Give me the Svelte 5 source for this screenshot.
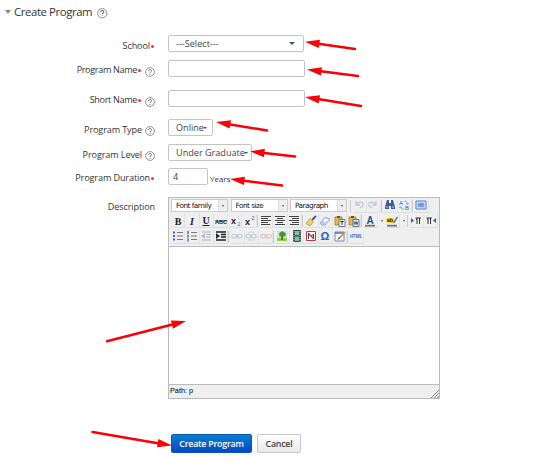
<script>
  const rows = [
    ['bold', 'italic', 'under', 'strike', 'sub', 'sup', '|', 'left', 'center', 'right', '|', 'brush', 'eraser', 'paste', 'pastew', '|', 'color', 'v', 'hilite', 'v', '|', 'ltr', 'rtl'],
    ['ul', 'ol', 'outdent', 'indent', '|', 'link', 'unlink', 'anchor', '|', 'image', 'film', 'nolink', 'omega', 'edit', '|', 'html']
  ];
  const arrows = [
    [305, 41.7, 355, 49], [307, 69.5, 358, 76], [305, 97, 361, 106], [216, 122, 267, 130.5],
    [250, 151.3, 295, 156.5], [230, 179, 282, 185.5], [186, 321, 107, 341.3], [172, 445.6, 92.5, 432]
  ].map(([x, y, tx, ty]) => {
    const len = Math.hypot(tx - x, ty - y);
    return { x, y, len, angle: (Math.atan2(ty - y, tx - x) * 180) / Math.PI };
  });
</script>

{#snippet help(size)}
  <svg class="help" width={size} height={size} viewBox="0 0 10 10">
    <circle cx="5" cy="5" r="4.4" fill="#fff" stroke="#777" stroke-width=".8" />
    <path d="M3.5 4C3.5 2 6.5 2 6.5 3.8C6.5 4.8 5 4.8 5 6M5 6.9V7.9" fill="none" stroke="#666" stroke-width="1" />
  </svg>
{/snippet}

{#snippet icon(name)}
  <svg class="icon" width="12" height="12" viewBox="0 0 12 12" fill="none">
    {#if name === 'bold'}<text x="6" y="9.5" class="g b">B</text>
    {:else if name === 'italic'}<text x="6" y="9.5" class="g b i">I</text>
    {:else if name === 'under'}<text x="6" y="9" class="g b">U</text><path d="M2.5 10.5h7" stroke="#222" />
    {:else if name === 'strike'}<text x="6" y="8.5" class="g abc">ABC</text><path d="M0 6h12" stroke="#222" stroke-width=".8" />
    {:else if name === 'sub'}<text x="4.5" y="8.5" class="g x">x</text><text x="10" y="11" class="g n">2</text>
    {:else if name === 'sup'}<text x="4.5" y="9.5" class="g x">x</text><text x="10" y="5" class="g n">2</text>
    {:else if name === 'left'}<path d="M1 1.5h10M1 3.5h7M1 5.5h10M1 7.5h7M1 9.5h9" stroke="#444" stroke-width="1.1" />
    {:else if name === 'center'}<path d="M1 1.5h10M3 3.5h6M1 5.5h10M3 7.5h6M1 9.5h10" stroke="#444" stroke-width="1.1" />
    {:else if name === 'right'}<path d="M1 1.5h10M4 3.5h7M1 5.5h10M4 7.5h7M2 9.5h9" stroke="#444" stroke-width="1.1" />
    {:else if name === 'brush'}<path d="M11 1L7 5" stroke="#4a587a" stroke-width="2" /><path d="M5 3.5l3.5 3.3L5 11 1 8.5z" fill="#f3d45c" stroke="#a98a32" stroke-width=".7" />
    {:else if name === 'eraser'}<path d="M1 8l5-5.5 5 1.5-5 6H3z" fill="#f7f9ff" stroke="#7182a8" stroke-width=".8" /><path d="M1 8l4 2 2-2.5-4-2z" fill="#b9c8ea" />
    {:else if name === 'paste' || name === 'pastew'}
      <path d="M1 2h7v8H1z" fill="#e5b94b" stroke="#a07a25" stroke-width=".8" /><path d="M3 1h3v2H3z" fill="#555" />
      <path d="M5 4.5h6v7H5z" fill={name === 'paste' ? '#fff' : '#dce9ff'} stroke="#44597e" stroke-width=".8" />
      {#if name === 'paste'}<path d="M6.3 6.5h3.4M8 6.5v3.5" stroke="#222" />{:else}<path d="M6 6.5l1 3 1-3 1 3 1-3" stroke="#2451a5" stroke-width=".9" />{/if}
    {:else if name === 'color'}<text x="6" y="8.5" class="g a">A</text><path d="M1 10.7h10" stroke="#777" stroke-width="1.8" />
    {:else if name === 'hilite'}<path d="M0 3h7l2 5H1z" fill="#f0d832" /><text x="4" y="7" class="g abc">ab</text><path d="M11.5 2L7.5 8" stroke="#6d7890" stroke-width="1.5" /><path d="M1 10.7h10" stroke="#777" stroke-width="1.8" />
    {:else if name === 'ltr'}<path d="M1 3l3 2.5L1 8z" fill="#3464ae" /><path d="M7 3v6M9.5 3v6M5.5 3H11M6 4.3h1" stroke="#333" />
    {:else if name === 'rtl'}<path d="M11 3L8 5.5 11 8z" fill="#3464ae" /><path d="M3 3v6M5.5 3v6M1.5 3H7M2 4.3h1" stroke="#333" />
    {:else if name === 'ul'}<path d="M1 2.5h2M1 6h2M1 9.5h2" stroke="#3869bb" stroke-width="2" /><path d="M5 2.5h6M5 6h6M5 9.5h6" stroke="#777" />
    {:else if name === 'ol'}<path d="M2 1v3M2 4.7v3M2 8.4v3" stroke="#3869bb" stroke-width="1.4" /><path d="M5 2.5h6M5 6h6M5 9.5h6" stroke="#777" />
    {:else if name === 'outdent'}<g opacity=".45"><path d="M2 2h9M6 4.5h5M6 7h5M2 10h9" stroke="#666" /><path d="M5 3L1 6l4 3z" fill="#6688bb" /></g>
    {:else if name === 'indent'}<path d="M1 2h10M6 4.5h5M6 7h5M1 10h10" stroke="#222" stroke-width="1.4" /><path d="M1 3l4 3-4 3z" fill="#222f51" />
    {:else if name === 'link' || name === 'unlink' || name === 'anchor'}
      <g opacity=".5" stroke={name === 'anchor' ? '#d49a9a' : '#94a5c4'} stroke-width="1.2"><rect x=".8" y="4.5" width="5" height="3.5" rx="1.7" /><rect x="6.2" y="4.5" width="5" height="3.5" rx="1.7" />
        {#if name === 'link'}<path d="M4 6.2h4" />{:else if name === 'unlink'}<path d="M6 1v2M6 9v2M3 2l1 1M9 2L8 3M3 10.5l1-1M9 10.5l-1-1" />{:else}<path d="M4 4l4 4.5" />{/if}</g>
    {:else if name === 'image'}<path d="M1 1h10v10H1z" fill="#c6e6ef" /><path d="M1 8h10v3H1z" fill="#8ad03c" /><path d="M3 3.5L6 1l4 2.5-1 3H3.5z" fill="#3e9a22" /><path d="M6 6v4" stroke="#72491d" stroke-width="1.5" />
    {:else if name === 'film'}<path d="M2 0h8v12H2z" fill="#353f49" /><path d="M4 1h4v4.3H4zM4 6.5h4v4.5H4z" fill="#73c7a2" /><path d="M3 .8v11M9 .8v11" stroke="#eee" stroke-dasharray="1 1" />
    {:else if name === 'nolink'}<path d="M1.5 1.5h9v9h-9z" fill="#fff" stroke="#b33a45" /><path d="M3.5 9V4l3 2 2-2v5" stroke="#444" /><path d="M3 3l6 6" stroke="#d22331" stroke-width="1.3" />
    {:else if name === 'omega'}<text x="6" y="10" class="g o">Ω</text>
    {:else if name === 'edit'}<path d="M1 2h9v9H1z" fill="#f7faff" stroke="#7288b0" /><path d="M1 3h9" stroke="#5474b0" stroke-width="1.5" /><path d="M11 2L5 8.5" stroke="#d19528" stroke-width="1.8" /><path d="M5.5 7.5L4 9.5" stroke="#333" />
    {:else if name === 'html'}<text x="6" y="8" class="g h">HTML</text>
    {:else if name === 'undo'}<path d="M3 2v4h4M3 5.5C6 1.5 11 3 10 6c-.4 1.7-1.7 2.5-3 3" stroke="#b7c8e5" stroke-width="1.3" />
    {:else if name === 'redo'}<path d="M9 2v4H5M9 5.5C6 1.5 1 3 2 6c.4 1.7 1.7 2.5 3 3" stroke="#b7c8e5" stroke-width="1.3" />
    {:else if name === 'find'}<path d="M3 1h2v3h2V1h2l2 7v2H7V7H5v3H1V8z" fill="#3f5c98" /><path d="M2 8h2M8 8h2" stroke="#b6caf0" />
    {:else if name === 'replace'}<text x="3" y="6" class="g r">A</text><text x="9" y="11" class="g r">B</text><path d="M6 2.5C8 1.5 10 3 9.5 5.5M8 4l1.5 1.5L11 4M6 10C4 10.5 2.5 9.5 2.5 7.5M1 9l1.5-1.5L4 9" stroke="#7ea3dc" stroke-width=".9" />
    {:else if name === 'full'}<path d="M1 2h10v8H1z" fill="#e2edff" stroke="#4c79c0" /><path d="M3 4h6v4H3z" fill="#6598df" stroke="#8db1e8" />
    {/if}
  </svg>
{/snippet}

{#snippet tool(t)}
  {#if t === '|'}<i class="sep"></i>
  {:else if t === 'v'}<span class="drop"><b class="tri"></b></span>
  {:else}<span class="btn">{@render icon(t)}</span>{/if}
{/snippet}

<main>
  <h1><i class="fold"></i><span>Create Program</span>{@render help(10.5)}</h1>

  <div class="row r1"><div class="label">School<em></em></div><div class="field wide sel"><span>---Select---</span><i class="caret"></i></div></div>
  <div class="row r2"><div class="label tight">Program Name<em></em>{@render help(10)}</div><div class="field name"></div></div>
  <div class="row r3"><div class="label tight">Short Name<em></em>{@render help(10)}</div><div class="field name"></div></div>
  <div class="row r4"><div class="label">Program Type{@render help(10)}</div><div class="field type"><span>Online</span><i class="caret small"></i></div></div>
  <div class="row r5"><div class="label">Program Level{@render help(10)}</div><div class="field level"><span>Under Graduate</span><i class="caret small"></i></div></div>
  <div class="row r6"><div class="label">Program Duration<em></em></div><div class="field dur">4</div><small>Years</small></div>

  <div class="row desc">
    <div class="label">Description</div>
    <div class="editor">
      <div class="bars">
        <div class="bar">
          {#each ['Font family', 'Font size', 'Paragraph'] as s}
            <div class="list"><span>{s}</span><span class="open"><b class="tri"></b></span></div>
          {/each}
          <i class="sep first"></i>
          {#each ['undo', 'redo', '|', 'find', 'replace', '|', 'full'] as t}{@render tool(t)}{/each}
        </div>
        {#each rows as r}
          <div class="bar">{#each r as t}{@render tool(t)}{/each}</div>
        {/each}
      </div>
      <div class="body"></div>
      <div class="status"><span>Path: p</span>
        <svg width="8" height="8" viewBox="0 0 8 8"><path d="M0 8L8 0M3 8L8 3M6 8l2-2" stroke="#888" stroke-width="1" /></svg>
      </div>
    </div>
  </div>

  <div class="actions"><button class="primary">Create Program</button><button>Cancel</button></div>

  <svg class="notes" width="534" height="463">
    {#each arrows as a}
      <g transform="translate({a.x} {a.y}) rotate({a.angle})">
        <path d="M10 0H{a.len}" stroke="#fb0007" stroke-width="2.5" stroke-linecap="round" />
        <path d="M0 0L14.5 -4.2V4.2Z" fill="#fb0007" />
      </g>
    {/each}
  </svg>
</main>

<style>
  main { position: relative; width: 534px; height: 463px; background: #fff; overflow: hidden; font: 9.1px/12px "Open Sans", sans-serif; color: #333; }
  h1 { margin: 0; height: 35px; box-sizing: border-box; padding: 3px 0 0 5px; display: flex; align-items: flex-start; font-size: 11.4px; line-height: 17px; font-weight: 400; letter-spacing: -.42px; }
  h1 span { width: 78px; margin-right: 5px; white-space: nowrap; }
  h1 .help { margin-top: 5px; }
  .fold { border: 3.5px solid transparent; border-top: 4px solid #888; border-bottom: 0; margin: 7px 3px 0 0; }
  .row { display: flex; align-items: flex-start; box-sizing: border-box; }
  .label { width: 155px; margin-right: 13px; padding-top: 5px; display: flex; justify-content: flex-end; white-space: nowrap; flex: none; letter-spacing: -.12px; }
  .label .help { margin: 2px 0 0 3px; }
  .tight { letter-spacing: -.35px; padding-top: 4px; }
  .tight .help { margin-top: 3px; }
  em { width: 3px; height: 3px; margin: 5px 1px 0 1px; border-radius: 50%; background: #f33; }
  .r1 { height: 25px; } .r2 { height: 30px; } .r3 { height: 29px; } .r4 { height: 25px; } .r5 { height: 24px; } .r6 { height: 29px; }
  .r6 .label { padding-top: 4px; }
  .field { box-sizing: border-box; height: 17px; border: 1px solid #c4c4c4; border-radius: 2px; padding-left: 7px; line-height: 15px; display: flex; align-items: center; white-space: nowrap; color: #444; }
  .wide { width: 136px; justify-content: space-between; padding-right: 8px; }
  .name { width: 137px; }
  .type { width: 45px; } .level { width: 84px; } .dur { width: 40px; padding-left: 4px; }
  .caret { border: 3px solid transparent; border-top: 3px solid #456; border-bottom: 0; }
  .caret.small { border-width: 2.5px 2px 0; margin-left: -1px; }
  small { font-size: 8px; margin: 5px 0 0 2px; }
  .desc { height: 237px; }
  .desc .label { padding-top: 4px; }
  .editor { width: 272px; height: 202px; box-sizing: border-box; border: 1px solid #bbb; display: flex; flex-direction: column; }
  .bars { background: #efefef; height: 49px; box-sizing: border-box; border-bottom: 1px solid #bbb; }
  .bar { height: 15.6px; display: flex; align-items: center; padding-left: 2px; }
  .btn { width: 14.3px; height: 14px; display: flex; align-items: center; justify-content: center; flex: none; box-sizing: border-box; border-right: 1px solid #e2e2e2; border-bottom: 1px solid #dedede; }
  .icon { flex: none; }
  .sep { width: 1px; height: 12px; background: #ccc; margin-right: 1.3px; flex: none; }
  .sep.first { margin: 0 2px 0 0; }
  .drop { width: 7.5px; flex: none; display: flex; justify-content: center; }
  .tri { border: 1.5px solid transparent; border-top: 2px solid #555; border-bottom: 0; }
  .list { width: 57px; height: 13px; box-sizing: border-box; margin-right: 2.5px; border: 1px solid #ccc; background: #fff; display: flex; justify-content: space-between; font: 7.3px/11px "DejaVu Sans", sans-serif; letter-spacing: -.5px; color: #111; padding-left: 4px; white-space: nowrap; }
  .open { width: 8px; background: #eee; border-left: 1px solid #ddd; display: flex; align-items: center; justify-content: center; }
  .body { flex: 1; background: #fff; }
  .status { height: 14px; box-sizing: border-box; border-top: 1px solid #bbb; background: #efefef; display: flex; justify-content: space-between; align-items: flex-end; font: 7.3px/12px "Liberation Sans", sans-serif; color: #000; padding-left: 1px; }
  .status span { padding-bottom: 1.5px; }
  .g { text-anchor: middle; fill: #222; font: 7px "Liberation Sans", sans-serif; }
  .b { font: 700 10px "Liberation Serif", serif; } .i { font-style: italic; }
  .abc { font-size: 5.5px; font-weight: 700; } .x { font-size: 9px; font-weight: 700; } .n { font-size: 5px; fill: #2458b5; }
  .a { font-size: 10px; font-weight: 700; fill: #2c4f83; } .o { font-size: 11px; fill: #245dc1; font-weight: 700; }
  .h { font-size: 4.7px; font-weight: 700; fill: #3c70bd; } .r { font-size: 6px; fill: #245dc1; }
  .actions { display: flex; gap: 5px; padding-left: 171px; }
  button { box-sizing: border-box; width: 44px; height: 19px; padding: 0; font: 600 8.8px/16px "Open Sans", sans-serif; letter-spacing: -.2px; white-space: nowrap; color: #444; border: 1px solid #c8c8c8; border-radius: 2px; background: linear-gradient(#fff, #e9e9e9); }
  .primary { width: 81px; color: #fff; border-color: #0759b8; background: linear-gradient(#087fd0, #0647c3); }
  .notes { position: absolute; left: 0; top: 0; }
</style>
